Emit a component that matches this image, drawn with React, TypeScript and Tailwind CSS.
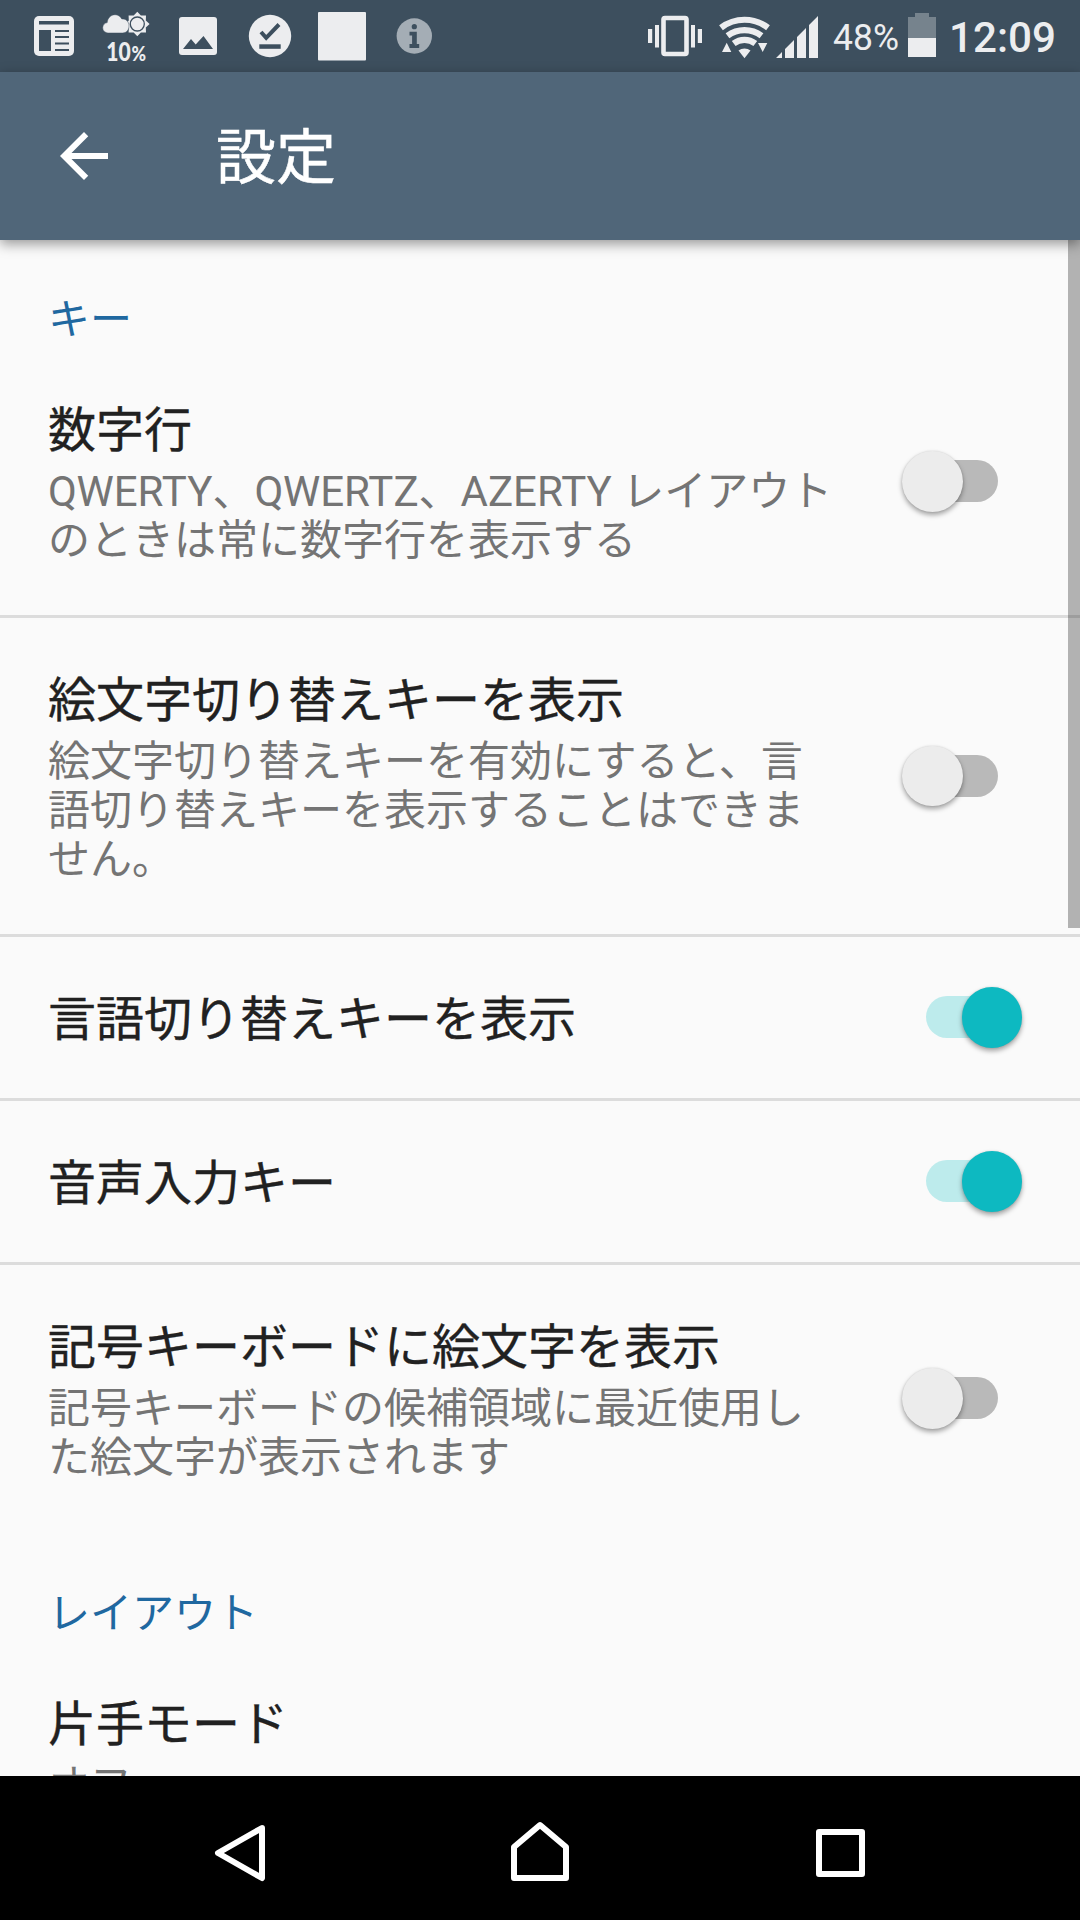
import React from "react";

function Switch({ on }: { on: boolean }) {
  return (
    <div className="relative mr-[82px] mb-px h-[42px] w-[72px] shrink-0">
      <div className={`h-[42px] w-[72px] rounded-full ${on ? "bg-[#bdebec]" : "bg-[#b9b9b9]"}`} />
      <div
        className={`absolute -top-[9px] size-[60.5px] rounded-full shadow-[0_3px_5px_rgba(0,0,0,0.35),0_0_2px_rgba(0,0,0,0.12)] ${
          on ? "left-[35.5px] bg-[#0db9c1]" : "-left-[24px] bg-[#ececec]"
        }`}
      />
    </div>
  );
}

type RowProps = { title: string; lines?: string[]; on?: boolean; divider?: boolean };

function Row({ title, lines = [], on, divider }: RowProps) {
  return (
    <div
      className={`flex shrink-0 items-center justify-between pl-12 ${
        divider ? "border-b-[3px] border-[#dcdcdc]" : ""
      }`}
    >
      <div className="pt-[55px] pb-[50px]">
        <div className="h-14 text-[48px] leading-[56px] whitespace-nowrap text-[#212121] [-webkit-text-stroke:0.35px_#212121]">
          {title}
        </div>
        {lines.length > 0 && (
          <div className="pt-2 text-[42px] leading-[49px] whitespace-nowrap text-[#747474]">
            {lines.map((l) => (
              <div key={l}>{l}</div>
            ))}
          </div>
        )}
      </div>
      {on !== undefined && <Switch on={on} />}
    </div>
  );
}

function Section({ children, className }: { children: string; className: string }) {
  return (
    <div className={`flex shrink-0 items-end pb-[3px] pl-12 text-[42px] leading-[50px] text-[#1f68a0] ${className}`}>
      {children}
    </div>
  );
}

function LeftIcons() {
  return (
    <svg width="450" height="72" viewBox="0 0 450 72" fill="#ecedef">
      <rect x="34" y="16" width="40" height="40" rx="5" />
      <g fill="#3d4f5e">
        <rect x="39" y="21" width="30" height="3.5" />
        <rect x="39" y="30" width="12" height="21" />
        <rect x="55" y="30" width="14" height="2" />
        <rect x="55" y="36" width="14" height="2" />
        <rect x="55" y="42.5" width="14" height="2" />
        <rect x="55" y="49" width="14" height="2" />
      </g>
      <path d="M137.3 11.8l3.6 3.8 5.1-.2-.2 5 3.8 3.6-3.8 3.6.2 5-5.1-.1-3.6 3.8-3.6-3.8-5.1.1.2-5-3.8-3.6 3.8-3.6-.2-5 5.100.2z" />
      <circle cx="137.3" cy="24" r="7" fill="none" stroke="#3d4f5e" strokeWidth="1.3" />
      <path
        d="M108.5 33C105 33 102.700 30.500 102.700 27.700c0-2.800 2.100-4.800 4.500-5.100C107.500 18 111 14.700 115 14.700c3 0 5.500 1.700 6.800 4.300 4.200-.7 7.200 2.800 7.200 7 0 4-2.500 7-6.500 7z"
        stroke="#3d4f5e"
        strokeWidth=".5"
      />
      <text transform="translate(106.200 61) scale(.78 1)" fontFamily="Lato" fontWeight="900" fontSize="27">10</text>
      <text transform="translate(131.500 60.500) scale(.88 1)" fontFamily="Lato" fontWeight="900" fontSize="20">%</text>
      <rect x="179" y="17" width="38" height="38" rx="3" />
      <path d="M183 49l8-10 4.700 5.500L203.500 36l9.500 13z" fill="#3d4f5e" />
      <circle cx="270" cy="36" r="21.200" />
      <path d="M261 32l5.200 5.800L279 24.500" fill="none" stroke="#3d4f5e" strokeWidth="4" />
      <rect x="259.300" y="44.300" width="21.400" height="4.500" fill="#3d4f5e" />
      <rect x="318" y="12" width="48" height="48.500" rx="1" />
      <circle cx="414.300" cy="36" r="17.700" fill="#a4adb5" />
      <g fill="#3d4f5e">
        <circle cx="414.300" cy="26.700" r="2.600" />
        <path d="M409.500 31.700h7.300v12.300h2.400v4h-9.700v-4h2.600v-8.500h-2.600z" />
      </g>
    </svg>
  );
}

function RightIcons() {
  return (
    <svg width="450" height="72" viewBox="630 0 450 72" fill="#ecedef">
      <rect x="648" y="29" width="4.200" height="14" />
      <rect x="655" y="25" width="4" height="22.500" />
      <rect x="691" y="25" width="4" height="22.500" />
      <rect x="697.800" y="29" width="4.200" height="14" />
      <rect x="663.500" y="18" width="23" height="36" rx="1.500" fill="none" stroke="#ecedef" strokeWidth="4.600" />
      <g fill="none" stroke="#ecedef" strokeWidth="6.200">
        <path d="M721 27.700A38.800 38.800 0 0 1 768 27.700" />
        <path d="M727.500 35.800A28.300 28.300 0 0 1 761.500 35.800" />
        <path d="M733.700 43.500A18 18 0 0 1 755.300 43.500" />
      </g>
      <path d="M744.500 58.300L738.500 50.500a10 10 0 0 1 12 0z" />
      <path d="M722 52h9.300l-4.600-9.300zM758 43h9.300l-4.600 9z" />
      <path d="M776 58l6-6v6zM785 58V49l9-9v18zM797 58V37l9-9v30zM809 58V25l9-9v42z" />
      <text x="833" y="50" fontFamily="Roboto" fontSize="36" textLength="66" lengthAdjust="spacingAndGlyphs">48%</text>
      <path d="M908 17h7v-4h14v4h7v21h-28z" fill="#76838d" />
      <rect x="908" y="38" width="28" height="19" />
      <text x="949" y="52" fontFamily="Roboto" fontWeight="500" fontSize="42" textLength="107" lengthAdjust="spacingAndGlyphs">12:09</text>
    </svg>
  );
}

export default function App() {
  return (
    <div className="flex h-[1920px] w-[1080px] flex-col overflow-hidden bg-[#fafafa] font-[Roboto,'Noto_Sans_CJK_JP',sans-serif]">
      <div className="flex h-[72px] shrink-0 justify-between bg-[#3d4f5e]">
        <LeftIcons />
        <RightIcons />
      </div>
      <header className="z-10 flex h-[168px] shrink-0 items-center bg-[#506679] pl-12 shadow-[0_4px_12px_rgba(0,0,0,0.4)]">
        <svg width="72" height="72" viewBox="0 0 24 24" fill="#fff">
          <path d="M20 11H7.830l5.590-5.590L12 4l-8 8 8 8 1.410-1.410L7.830 13H20v-2z" />
        </svg>
        <h1 className="pt-[5px] pl-24 text-[60px] leading-[70px] font-normal text-white [-webkit-text-stroke:0.5px_#fff]">
          設定
        </h1>
      </header>
      <main className="relative flex min-h-0 flex-1 flex-col overflow-hidden">
        <Section className="h-[108px]">キー</Section>
        <Row
          title="数字行"
          lines={["QWERTY、QWERTZ、AZERTY レイアウト", "のときは常に数字行を表示する"]}
          on={false}
          divider
        />
        <Row
          title="絵文字切り替えキーを表示"
          lines={["絵文字切り替えキーを有効にすると、言", "語切り替えキーを表示することはできま", "せん。"]}
          on={false}
          divider
        />
        <Row title="言語切り替えキーを表示" on divider />
        <Row title="音声入力キー" on divider />
        <Row
          title="記号キーボードに絵文字を表示"
          lines={["記号キーボードの候補領域に最近使用し", "た絵文字が表示されます"]}
          on={false}
        />
        <Section className="h-[110px]">レイアウト</Section>
        <Row title="片手モード" lines={["オフ"]} />
        <div className="absolute top-0 right-0 h-[688px] w-3 bg-black/[0.285]" />
      </main>
      <nav className="flex h-36 shrink-0 bg-black">
        <svg width="1080" height="144" viewBox="0 1776 1080 144" fill="none" stroke="#fff" strokeWidth="6" strokeLinejoin="round">
          <path d="M262 1828L218 1853L262 1878Z" />
          <path d="M514 1878V1847L540 1825L566 1847V1878Z" />
          <rect x="819" y="1832" width="43" height="42" />
        </svg>
      </nav>
    </div>
  );
}
